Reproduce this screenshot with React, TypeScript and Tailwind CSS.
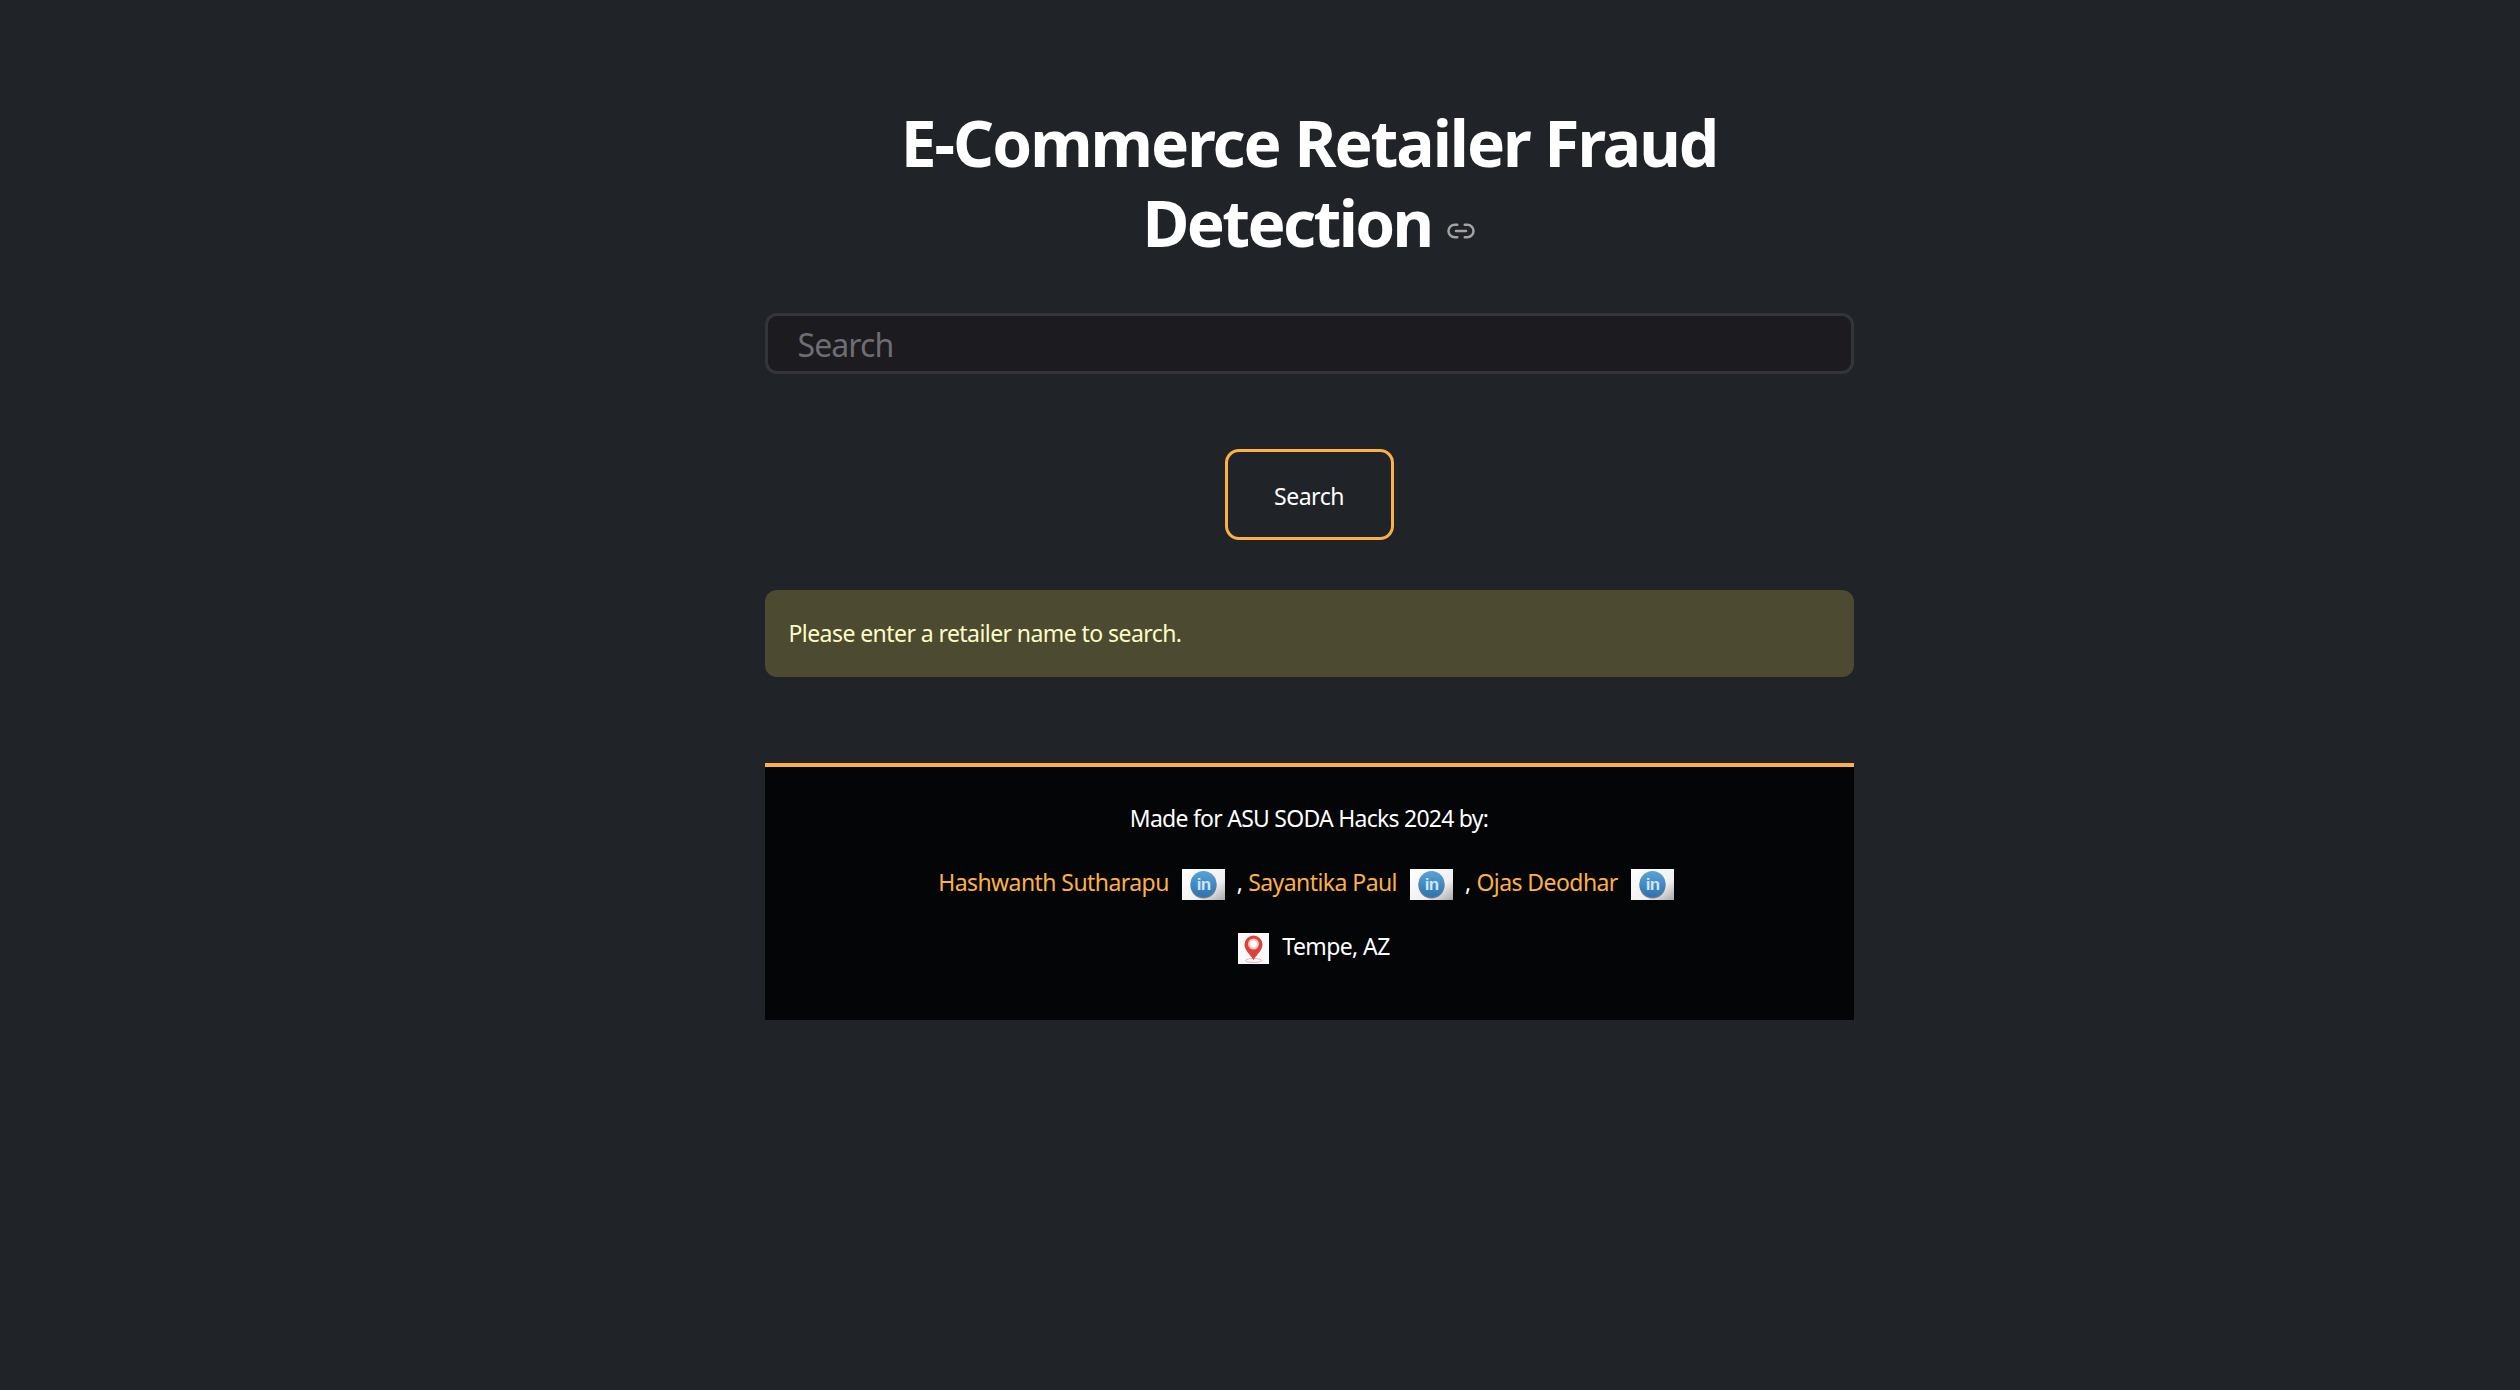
import { Link2 } from 'lucide-react';

function LinkedInIcon() {
  return (
    <svg width="43" height="31" viewBox="0 0 43 31" className="mt-[5px] shrink-0">
      <defs>
        <linearGradient id="tile" x1="0" y1="0" x2="1" y2="1">
          <stop offset="0" stopColor="#ffffff" />
          <stop offset="0.65" stopColor="#f0f0f0" />
          <stop offset="1" stopColor="#a8a8a8" />
        </linearGradient>
        <linearGradient id="disc" x1="0" y1="0" x2="0" y2="1">
          <stop offset="0" stopColor="#5ba2d6" />
          <stop offset="1" stopColor="#2c74b2" />
        </linearGradient>
      </defs>
      <rect width="43" height="31" fill="url(#tile)" />
      <circle cx="21.5" cy="16.5" r="13" fill="#6f7b86" />
      <circle cx="21.5" cy="15" r="13" fill="url(#disc)" />
      <text x="21.5" y="21" textAnchor="middle" fontFamily="'Liberation Sans', sans-serif" fontWeight="700" fontSize="17" fill="#cfe6f7">in</text>
    </svg>
  );
}

function PinIcon() {
  return (
    <svg width="31" height="31" viewBox="0 0 31 31" className="mt-[5px] shrink-0">
      <rect width="31" height="31" fill="#fafafa" />
      <ellipse cx="15.5" cy="27.5" rx="8" ry="2" fill="none" stroke="#eab0aa" strokeWidth="1" />
      <path d="M15.5 27 C12 21 6.5 17.5 6.5 11.5 A9 9 0 0 1 24.5 11.5 C24.5 17.5 19 21 15.5 27 Z" fill="#d9433a" />
      <circle cx="15.5" cy="11" r="5.5" fill="#f3c3bd" />
      <circle cx="15.5" cy="11" r="3.4" fill="#ffffff" />
    </svg>
  );
}

function Author({ name }: { name: string }) {
  return (
    <>
      <a href="#" className="tracking-[-0.57px] text-[#fdb045]">{name}</a>
      <span className="ml-[13px] flex"><LinkedInIcon /></span>
    </>
  );
}

export default function App() {
  return (
    <main className="flex min-h-[1390px] justify-center bg-[#202328] pl-[98px] font-['Noto_Sans',sans-serif] text-white">
      <div className="flex w-[1089px] flex-col pt-[103px]">
        <h1 className="text-center text-[64px] leading-[80px] font-bold tracking-[-2px]">
          E-Commerce Retailer Fraud
          <br />
          <span className="tracking-[-2.6px]">Detection</span>
          <Link2 className="ml-[14px] inline-block align-[1px] text-[#a3a3a3]" size={30} strokeWidth={2} />
        </h1>

        <input
          placeholder="Search"
          className="mt-[50px] h-[61px] w-full rounded-[12px] border-[3px] border-[#33353b] bg-[#1b1b20] px-[30px] pt-[2px] text-[32px] tracking-[-0.9px] outline-none placeholder:text-[#6d6d72]"
        />

        <button className="mx-auto mt-[75px] h-[91px] w-[169px] rounded-[14px] border-[3px] border-[#fdb045] pt-[3px] text-[23px] tracking-[-0.5px] text-white">
          Search
        </button>

        <div className="mt-[50px] flex h-[87px] items-center rounded-[12px] bg-[#4c4b32] px-[24px] text-[23px] tracking-[-0.57px] text-[#fdfdc5]">
          Please enter a retailer name to search.
        </div>

        <footer className="mt-[86px] flex h-[257px] flex-col items-center border-t-[4px] border-[#fdb045] bg-[#030507] pt-[31px] text-[23px] leading-[40px] tracking-[-0.75px]">
          <p>Made for ASU SODA Hacks 2024 by:</p>
          <div className="mt-[24px] flex h-[40px] items-center pr-[6px]">
            <Author name="Hashwanth Sutharapu" />
            <span className="ml-[12px] mr-[6px]">,</span>
            <Author name="Sayantika Paul" />
            <span className="ml-[12px] mr-[6px]">,</span>
            <Author name="Ojas Deodhar" />
          </div>
          <div className="mt-[24px] flex h-[40px] items-center gap-[13px] pl-[10px]">
            <PinIcon />
            <span className="tracking-[-0.6px]">Tempe, AZ</span>
          </div>
        </footer>
      </div>
    </main>
  );
}
